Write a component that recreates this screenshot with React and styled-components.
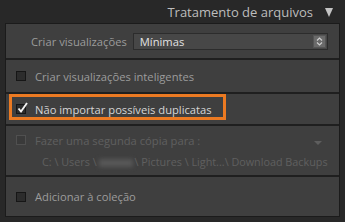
import React from 'react';
import styled, { createGlobalStyle } from 'styled-components';

const GlobalStyle = createGlobalStyle`
  html, body {
    margin: 0;
    padding: 0;
    background: #282828;
  }
  body {
    font-family: "Open Sans", "Noto Sans", sans-serif;
  }
`;

const Page = styled.div`
  width: 345px;
  height: 222px;
  background: #282828;
  overflow: hidden;
  box-sizing: border-box;
  padding: 0 5px 0 5px;
`;

const Header = styled.div`
  height: 23px;
  display: flex;
  align-items: center;
  justify-content: flex-end;
  gap: 12px;
  padding-right: 7px;
  color: #bdbdbd;
  font-size: 13px;
`;

const Triangle = styled.span`
  width: 0;
  height: 0;
  border-left: 4.5px solid transparent;
  border-right: 4.5px solid transparent;
  border-top: 9px solid #c4c4c4;
  margin-top: 1px;
`;

const Panel = styled.div`
  border: 1px solid #1b1b1b;
  background: #1f1f1f;
  display: flex;
  flex-direction: column;
  gap: 2px;
`;

const Section = styled.div`
  background: #3f3f3f;
  height: ${({ h }) => h}px;
  box-sizing: border-box;
  display: flex;
  flex-direction: column;
  justify-content: center;
  padding: ${({ pad }) => pad || '0 10px'};
  position: relative;
`;

const Row = styled.div`
  display: flex;
  align-items: center;
  gap: ${({ gap }) => gap || 9}px;
  font-size: 11.2px;
  color: ${({ dim, bright }) => (dim ? '#5f5f5f' : bright ? '#d6d6d6' : '#9c9c9c')};
  white-space: nowrap;
`;

const Select = styled.div`
  flex: 1;
  height: 15px;
  background: #474747;
  border: 1px solid #2c2c2c;
  display: flex;
  align-items: center;
  justify-content: space-between;
  padding-left: 6px;
  color: #e2e2e2;
  font-size: 11.2px;
`;

const Spinner = styled.div`
  width: 13px;
  height: 13px;
  margin-right: 1px;
  background: #6a6a6a;
  border: 1px solid #555;
  display: flex;
  align-items: center;
  justify-content: center;
  box-sizing: border-box;
`;

const Box = styled.span`
  width: 10px;
  height: 10px;
  box-sizing: border-box;
  background: ${({ dim }) => (dim ? '#3a3a3a' : '#2c2c2c')};
  border: 1px solid ${({ dim }) => (dim ? '#505050' : '#161616')};
  flex-shrink: 0;
  position: relative;
`;

const Highlight = styled.div`
  position: absolute;
  left: 3px;
  top: 0px;
  width: 217px;
  height: 26px;
  border: 3px solid #ec7a22;
  box-sizing: border-box;
  pointer-events: none;
`;

const Check = styled.svg`
  position: absolute;
  left: 0px;
  top: -3px;
`;

const SmallArrow = styled.span`
  position: absolute;
  right: 17px;
  top: 15px;
  width: 0;
  height: 0;
  border-left: 4px solid transparent;
  border-right: 4px solid transparent;
  border-top: 4px solid #5e5e5e;
`;

const Path = styled.div`
  font-size: 10.8px;
  color: #5f5f5f;
  padding-left: 26px;
  margin-top: 6px;
  white-space: nowrap;
`;

const Blur = styled.span`
  display: inline-block;
  width: 34px;
  height: 8px;
  background: #575757;
  filter: blur(2px);
  vertical-align: middle;
  margin: 0 2px;
`;

export default function App() {
  return (
    <>
      <GlobalStyle />
      <Page>
        <Header>
          <span>Tratamento de arquivos</span>
          <Triangle />
        </Header>
        <Panel>
          <Section h={34} pad="0 11px 0 25px">
            <Row gap={6}>
              <span>Criar visualizações</span>
              <Select>
                <span>Mínimas</span>
                <Spinner>
                  <svg width="7" height="9" viewBox="0 0 7 9">
                    <path d="M1 3.5 L3.5 1 L6 3.5" fill="none" stroke="#cfcfcf" strokeWidth="1.2" />
                    <path d="M1 5.5 L3.5 8 L6 5.5" fill="none" stroke="#cfcfcf" strokeWidth="1.2" />
                  </svg>
                </Spinner>
              </Select>
            </Row>
          </Section>
          <Section h={32}>
            <Row>
              <Box />
              <span>Criar visualizações inteligentes</span>
            </Row>
          </Section>
          <Section h={30}>
            <Highlight />
            <Row bright>
              <Box>
                <Check width="12" height="12" viewBox="0 0 12 12">
                  <path d="M1.5 6.5 L4 9.5 L10 1" fill="none" stroke="#f2f2f2" strokeWidth="1.9" />
                </Check>
              </Box>
              <span>Não importar possíveis duplicatas</span>
            </Row>
          </Section>
          <Section h={49}>
            <Row dim>
              <Box dim />
              <span>Fazer uma segunda cópia para :</span>
            </Row>
            <SmallArrow />
            <Path>
              C: \ Users \<Blur />\ Pictures \ Light...\ Download Backups
            </Path>
          </Section>
          <Section h={39}>
            <Row>
              <Box />
              <span>Adicionar à coleção</span>
            </Row>
          </Section>
        </Panel>
      </Page>
    </>
  );
}
